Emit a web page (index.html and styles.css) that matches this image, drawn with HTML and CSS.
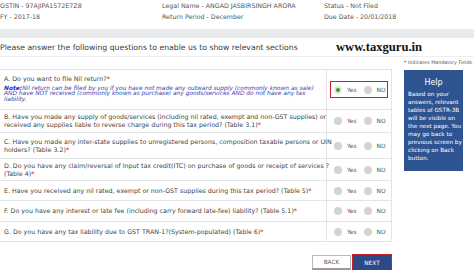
FILE: index.html
```html
<!DOCTYPE html>
<html>
<head>
<meta charset="utf-8">
<link rel="stylesheet" href="styles.css">
</head>
<body>
<div class="header">
  <span>GSTIN - 97AJIPA1572E7Z8</span>
  <span>Legal Name - ANGAD JASBIRSINGH ARORA</span>
  <span>Status - Not Filed</span>
  <span>FY - 2017-18</span>
  <span>Return Period - December</span>
  <span>Due Date - 20/01/2018</span>
</div>
<div class="band"></div>
<div class="intro">
  <span class="intro-text">Please answer the following questions to enable us to show relevant sections</span>
  <span class="brand">www.taxguru.in</span>
</div>
<div class="mandatory"><span class="req">*</span> Indicates Mandatory Fields</div>
<div class="content">
  <div class="main">
    <div class="qtable">
      <div class="row row-a">
        <div class="q">
          <div>A. Do you want to file Nil return?<span class="req">*</span></div>
          <div class="note"><b>Note:</b>Nil return can be filed by you if you have not made any outward supply (commonly known as sale)<br>AND have NOT received (commonly known as purchase) any goods/services AND do not have any tax<br>liability.</div>
        </div>
        <div class="opts"><div class="radios selected"><span class="dot on"></span><span>Yes</span><span class="dot"></span><span>NO</span></div></div>
      </div>
      <div class="row row-b">
        <div class="q"><div>B. Have you made any supply of goods/services (including nil rated, exempt and non-GST supplies) or<br>received any supplies liable to reverse charge during this tax period? (Table 3.1)<span class="req">*</span></div></div>
        <div class="opts"><div class="radios"><span class="dot"></span><span>Yes</span><span class="dot"></span><span>NO</span></div></div>
      </div>
      <div class="row row-c">
        <div class="q"><div>C. Have you made any inter-state supplies to unregistered persons, composition taxable persons or UIN<br>holders? (Table 3.2)<span class="req">*</span></div></div>
        <div class="opts"><div class="radios"><span class="dot"></span><span>Yes</span><span class="dot"></span><span>NO</span></div></div>
      </div>
      <div class="row row-d">
        <div class="q"><div>D. Do you have any claim/reversal of Input tax credit(ITC) on purchase of goods or receipt of services ?<br>(Table 4)<span class="req">*</span></div></div>
        <div class="opts"><div class="radios"><span class="dot"></span><span>Yes</span><span class="dot"></span><span>NO</span></div></div>
      </div>
      <div class="row row-e">
        <div class="q"><div>E. Have you received any nil rated, exempt or non-GST supplies during this tax period? (Table 5)<span class="req">*</span></div></div>
        <div class="opts"><div class="radios"><span class="dot"></span><span>Yes</span><span class="dot"></span><span>NO</span></div></div>
      </div>
      <div class="row row-f">
        <div class="q"><div>F. Do you have any interest or late fee (including carry forward late-fee) liability? (Table 5.1)<span class="req">*</span></div></div>
        <div class="opts"><div class="radios"><span class="dot"></span><span>Yes</span><span class="dot"></span><span>NO</span></div></div>
      </div>
      <div class="row row-g">
        <div class="q"><div>G. Do you have any tax liability due to GST TRAN-1?(System-populated) (Table 6)<span class="req">*</span></div></div>
        <div class="opts"><div class="radios"><span class="dot"></span><span>Yes</span><span class="dot"></span><span>NO</span></div></div>
      </div>
    </div>
    <div class="actions">
      <button class="btn back">BACK</button>
      <button class="btn next">NEXT</button>
    </div>
  </div>
  <aside class="help">
    <div class="help-title">Help</div>
    <div class="help-body">Based on your<br>answers, relevant<br>tables of GSTR-3B<br>will be visible on<br>the next page. You<br>may go back to<br>previous screen by<br>clicking on Back<br>button.</div>
  </aside>
</div>
</body>
</html>
```
FILE: styles.css
```css
* { box-sizing: border-box; }
html, body { margin: 0; padding: 0; background: #fff; }
body {
  width: 474px;
  height: 270px;
  overflow: hidden;
  font-family: "DejaVu Sans", Verdana, sans-serif;
  color: #444;
}
.header {
  display: grid;
  grid-template-columns: 162px 162px 150px;
  font-size: 6.3px;
  line-height: 11px;
  color: #555;
}
.header span { white-space: nowrap; }
.band {
  height: 9px;
  margin-top: 7px;
  background: #e8eaec;
}
.intro {
  height: 19px;
  display: flex;
  align-items: center;
  border-bottom: 1px solid #eceeef;
}
.intro-text {
  font-size: 7.7px;
  color: #3a3a3a;
  white-space: nowrap;
  width: 336px;
}
.brand {
  font-family: "Liberation Serif", "Times New Roman", serif;
  font-weight: bold;
  font-size: 12.6px;
  color: #111;
  white-space: nowrap;
}
.mandatory {
  height: 12px;
  text-align: right;
  font-size: 4.8px;
  line-height: 12px;
  color: #555;
  padding-right: 2px;
}
.req { color: #c4161c; }
.content {
  display: grid;
  grid-template-columns: 392px 59px;
  column-gap: 12px;
}
.qtable {
  border-top: 1px solid #e2e4e6;
  border-right: 1px solid #e2e4e6;
}
.row {
  display: grid;
  grid-template-columns: 327px 64px;
  border-bottom: 1px solid #e2e4e6;
}
.row-a { height: 40px; }
.row-b { height: 23px; }
.row-c { height: 26px; }
.row-d { height: 22px; }
.row-e { height: 20px; }
.row-f { height: 21px; }
.row-g { height: 20px; }
.q {
  font-size: 6.3px;
  line-height: 7.6px;
  color: #444;
  padding-left: 4px;
  white-space: nowrap;
  border-right: 1px solid #e2e4e6;
  display: flex;
  flex-direction: column;
  justify-content: center;
}
.row-a .q { justify-content: flex-start; padding-top: 5px; gap: 3px; }
.note {
  font-size: 5.9px;
  font-style: italic;
  color: #3b3bb0;
  line-height: 5.8px;
}
.note b { color: #2a2ac0; }
.opts {
  display: flex;
  align-items: center;
  padding-left: 3px;
}
.radios {
  display: flex;
  align-items: center;
  height: 17px;
  width: 58px;
  padding-left: 3px;
  font-size: 5.9px;
  color: #555;
  border: 1.5px solid transparent;
}
.radios.selected { border-color: #cc1f2a; }
.dot {
  width: 8px;
  height: 8px;
  border-radius: 50%;
  background: #d4d4d4;
  margin-right: 5px;
  flex: none;
}
.dot + span { margin-right: 7px; }
.dot.on {
  background: #3a9a2a;
  border: 2px solid #dcecd6;
}
.actions {
  display: flex;
  justify-content: flex-end;
  align-items: flex-start;
  gap: 1px;
  margin-top: 12px;
}
.btn {
  font-family: "DejaVu Sans", Verdana, sans-serif;
  font-size: 5.8px;
  padding: 0;
  margin: 0;
  cursor: pointer;
}
.back {
  width: 39px;
  height: 15px;
  margin-top: 1px;
  background: #fff;
  color: #666;
  border: 1px solid #b8b8b8;
  border-bottom: 2px solid #9a9a9a;
}
.next {
  width: 40px;
  height: 17px;
  background: #2c4a86;
  color: #fff;
  border: 1.5px solid #c8202c;
}
.help {
  margin-top: 1px;
  height: 101px;
  background: #2e5391;
  color: #fff;
  padding: 8px 4px 0;
}
.help-title {
  text-align: center;
  font-size: 8px;
  line-height: 10px;
  margin-bottom: 2px;
}
.help-body {
  font-size: 5.7px;
  line-height: 8px;
  white-space: nowrap;
}
```
